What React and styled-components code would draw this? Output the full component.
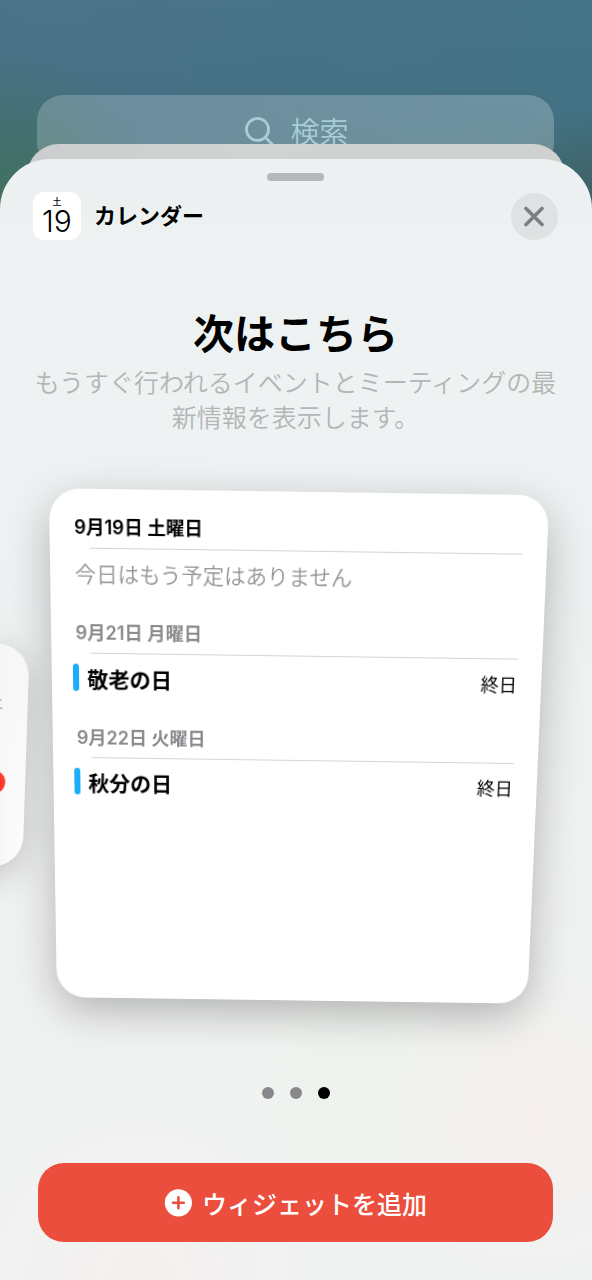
import React from 'react';
import styled, { createGlobalStyle } from 'styled-components';

const GlobalStyle = createGlobalStyle`
  * {
    box-sizing: border-box;
  }

  body {
    margin: 0;
    font-family: Inter, 'Noto Sans CJK JP', sans-serif;
    color: #000;
  }
`;

const Page = styled.div`
  display: flex;
  flex-direction: column;
  min-height: 100vh;
  padding-top: 95px;
  overflow: hidden;
  background:
    radial-gradient(circle at 0 200px, #41705f 0, rgba(65, 112, 95, 0) 150px),
    radial-gradient(circle at 100% 210px, #405f62 0, rgba(64, 95, 98, 0) 100px),
    linear-gradient(90deg, rgba(76, 112, 136, 0.5), rgba(64, 116, 132, 0.5)),
    linear-gradient(180deg, #4a7489 0, #436f82 110px, #426a70 220px);
`;

const SearchBar = styled.label`
  display: flex;
  align-items: center;
  justify-content: center;
  gap: 16px;
  height: 74px;
  margin: 0 38px -25px 37px;
  padding-left: 4px;
  border-radius: 26px;
  background: linear-gradient(90deg, rgba(255, 255, 255, 0.2), rgba(255, 255, 255, 0.23));
`;

const SearchInput = styled.input`
  width: 60px;
  padding: 0;
  border: 0;
  outline: 0;
  background: transparent;
  font-family: inherit;
  font-size: 29px;
  font-weight: 350;
  color: #a9cdd6;

  &::placeholder {
    color: #a9cdd6;
    opacity: 1;
  }
`;

const BackSheet = styled.div`
  position: relative;
  height: 60px;
  margin: 0 27px -45px;
  border-radius: 32px 32px 0 0;
  background: linear-gradient(90deg, #cbcdce, #d1d3d3 40%, #cfd1d0);
`;

const Sheet = styled.main`
  position: relative;
  display: flex;
  flex-direction: column;
  flex: 1;
  padding: 14px 34px 38px 33px;
  overflow: hidden;
  border-radius: 50px 50px 0 0;
  background:
    radial-gradient(circle at 90% 86%, #f5efed 0, rgba(245, 239, 237, 0) 150px),
    radial-gradient(circle at 24% 100%, #f5f0ef 0, rgba(245, 240, 239, 0) 160px),
    radial-gradient(circle at 60% 84%, #eef3ed 0, rgba(238, 243, 237, 0) 140px),
    linear-gradient(180deg, #ecf0f0 0, #eff2f2 20%, #edf1f1 40%, #f0f2f0 75%, #f0f2f2 100%);
`;

const Grabber = styled.div`
  align-self: center;
  width: 57px;
  height: 8px;
  border-radius: 4px;
  background: #b4b8ba;
`;

const Header = styled.header`
  display: flex;
  align-items: center;
  gap: 13px;
  margin-top: 11px;
`;

const AppIcon = styled.div`
  display: flex;
  flex-direction: column;
  align-items: center;
  width: 48px;
  height: 48px;
  padding-top: 3px;
  border-radius: 11px;
  background: #fff;
`;

const IconWeekday = styled.span`
  font-size: 9px;
  font-weight: 500;
  line-height: 13px;
`;

const IconDay = styled.span`
  font-size: 30px;
  font-weight: 300;
  line-height: 27px;
`;

const AppName = styled.span`
  flex: 1;
  font-size: 22px;
  font-weight: 600;
  line-height: 32px;
`;

const CloseButton = styled.button`
  display: flex;
  align-items: center;
  justify-content: center;
  width: 47px;
  height: 47px;
  padding: 0;
  border: 0;
  border-radius: 50%;
  background: #dee2e2;
`;

const Title = styled.h1`
  margin: 70px 0 0;
  font-size: 41px;
  font-weight: 700;
  line-height: 48px;
  text-align: center;
`;

const Description = styled.p`
  margin: 8px 0 0;
  font-size: 25px;
  font-weight: 350;
  line-height: 35px;
  text-align: center;
  color: #b3b6b6;
`;

const Gallery = styled.section`
  position: relative;
  margin-top: 62px;
  padding: 0 20px;
`;

const Card = styled.article`
  min-height: 512px;
  padding: 25px 24px 0;
  border-radius: 30px;
  background: #fff;
  box-shadow: 0 14px 44px rgba(0, 0, 0, 0.26);
  transform: perspective(1000px) rotateZ(0.8deg) rotateX(-7deg);
`;

const DaySection = styled.section`
  margin-bottom: 33px;
`;

const DayTitle = styled.h2`
  margin: 0;
  font-size: 18px;
  font-weight: 600;
  line-height: 24px;
  color: ${(props) => (props.$today ? '#000' : '#8a8a8e')};
`;

const Rule = styled.hr`
  height: 1px;
  margin: 7px 0 0 15px;
  border: 0;
  background: #d4d4d6;
`;

const Empty = styled.p`
  margin: 13px 0 0;
  font-size: 21px;
  font-weight: 350;
  line-height: 24px;
  color: #939397;
`;

const EventRow = styled.div`
  display: flex;
  align-items: center;
  gap: 8px;
  height: 31px;
  margin: 8px 0 0 -3px;
`;

const EventBar = styled.span`
  width: 6px;
  height: 27px;
  border-radius: 3px;
  background: #1badf8;
`;

const EventName = styled.span`
  flex: 1;
  font-size: 21px;
  font-weight: 600;
`;

const EventTime = styled.span`
  font-size: 18px;
`;

// neighbouring small widget that peeks in from the left
const SideCard = styled.article`
  position: absolute;
  top: 145px;
  left: -232px;
  display: flex;
  flex-direction: column;
  align-items: flex-end;
  gap: 58px;
  width: 225px;
  height: 225px;
  padding: 48px 20px;
  border-radius: 32px;
  background: linear-gradient(90deg, #f4f4f4 85%, #fff);
  box-shadow: 0 10px 36px rgba(0, 0, 0, 0.2);
  transform: perspective(1000px) rotateZ(1deg) rotateX(-8deg);
`;

const SideWeekday = styled.span`
  width: 24px;
  font-size: 15px;
  line-height: 20px;
  text-align: center;
  color: #8a8a8e;
`;

const TodayMark = styled.span`
  width: 24px;
  height: 24px;
  border-radius: 50%;
  background: #ff3b30;
`;

const Dots = styled.nav`
  display: flex;
  justify-content: center;
  gap: 16px;
  margin-top: 77px;
`;

const Dot = styled.button`
  width: 12px;
  height: 12px;
  padding: 0;
  border: 0;
  border-radius: 50%;
  background: ${(props) => (props.$active ? '#000' : '#88888c')};
`;

const AddButton = styled.button`
  display: flex;
  align-items: center;
  justify-content: center;
  gap: 10px;
  height: 79px;
  margin: 64px 5px 0;
  padding: 0;
  border: 0;
  border-radius: 26px;
  background: #eb4e3d;
  font-family: inherit;
  font-size: 25px;
  font-weight: 500;
  color: #fff;
`;

const days = [
  { title: '9月19日 土曜日', today: true },
  { title: '9月21日 月曜日', event: '敬老の日', time: '終日' },
  { title: '9月22日 火曜日', event: '秋分の日', time: '終日' },
];

function SearchIcon() {
  return (
    <svg width="30" height="30" viewBox="0 0 30 30" fill="none" stroke="#a9cdd6" strokeWidth="2.8" strokeLinecap="round">
      <circle cx="12.5" cy="12.4" r="11" />
      <path d="M20.4 20.4 28.4 28.4" />
    </svg>
  );
}

function CloseIcon() {
  return (
    <svg width="21" height="21" viewBox="0 0 21 21" stroke="#7b7f81" strokeWidth="3.6" strokeLinecap="round">
      <path d="M2 2.5 18 18.5M18 2.5 2 18.5" />
    </svg>
  );
}

function PlusIcon() {
  return (
    <svg width="28" height="28" viewBox="0 0 28 28">
      <circle cx="14.4" cy="13.8" r="13.6" fill="#fff" />
      <path d="M14.4 8.4V19.2M9 13.8H19.8" stroke="#eb4e3d" strokeWidth="2.6" strokeLinecap="round" />
    </svg>
  );
}

function Day({ day }) {
  return (
    <DaySection>
      <DayTitle $today={day.today}>{day.title}</DayTitle>
      <Rule />
      {day.event ? (
        <EventRow>
          <EventBar />
          <EventName>{day.event}</EventName>
          <EventTime>{day.time}</EventTime>
        </EventRow>
      ) : (
        <Empty>今日はもう予定はありません</Empty>
      )}
    </DaySection>
  );
}

function App() {
  return (
    <>
      <GlobalStyle />
      <Page lang="ja">
        <SearchBar>
          <SearchIcon />
          <SearchInput type="text" placeholder="検索" aria-label="検索" />
        </SearchBar>
        <BackSheet />
        <Sheet>
          <Grabber />
          <Header>
            <AppIcon>
              <IconWeekday>土</IconWeekday>
              <IconDay>19</IconDay>
            </AppIcon>
            <AppName>カレンダー</AppName>
            <CloseButton type="button" aria-label="閉じる">
              <CloseIcon />
            </CloseButton>
          </Header>
          <Title>次はこちら</Title>
          <Description>もうすぐ行われるイベントとミーティングの最新情報を表示します。</Description>
          <Gallery>
            <SideCard>
              <SideWeekday>土</SideWeekday>
              <TodayMark />
            </SideCard>
            <Card>
              {days.map((day) => (
                <Day key={day.title} day={day} />
              ))}
            </Card>
          </Gallery>
          <Dots>
            <Dot type="button" aria-label="1" />
            <Dot type="button" aria-label="2" />
            <Dot type="button" aria-label="3" $active />
          </Dots>
          <AddButton type="button">
            <PlusIcon />
            ウィジェットを追加
          </AddButton>
        </Sheet>
      </Page>
    </>
  );
}

export default App;
